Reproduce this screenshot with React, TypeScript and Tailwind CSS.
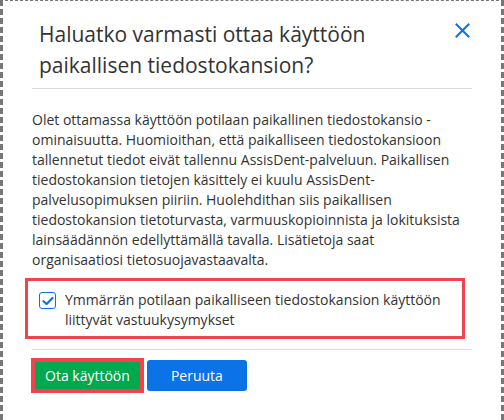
import React from "react";

const CheckIcon = () => (
  <span className="mt-[2px] flex h-[17px] w-[17px] shrink-0 items-center justify-center rounded-[3px] border-[1.5px] border-[#0b72e7] bg-white">
    <svg width="12" height="10" viewBox="0 0 12 10" fill="none">
      <path d="M1.5 5.2 L4.6 8 L10.5 2" stroke="#0b72e7" strokeWidth="2.2" strokeLinecap="round" strokeLinejoin="round" />
    </svg>
  </span>
);

const App = () => {
  return (
    <div className="h-[420px] w-[504px] overflow-hidden border-x-[3px] border-t border-dashed border-[#777] bg-white text-[#333]" style={{ fontFamily: '"Open Sans", "Noto Sans", sans-serif' }}>
      {/* header */}
      <div className="mx-[29px] flex items-start justify-between border-b border-[#d7dce1] pt-[18px] pb-[7px]">
        <h5 className="pl-[7px] text-[21px] leading-[31px] font-normal">
          Haluatko varmasti ottaa käyttöön paikallisen tiedostokansion?
        </h5>
        <button className="mt-[4px] mr-[2px] shrink-0 p-0 text-[#0b72e7]">
          <svg width="15" height="15" viewBox="0 0 15 15">
            <path d="M1.5 1.5 L13.5 13.5 M13.5 1.5 L1.5 13.5" stroke="currentColor" strokeWidth="2" strokeLinecap="square" />
          </svg>
        </button>
      </div>

      {/* body */}
      <div className="mx-[29px] border-b border-[#d7dce1] pt-[21px] pb-[10px]">
        <p className="w-[440px] text-[14px] leading-[20px]">
          Olet ottamassa käyttöön potilaan paikallinen tiedostokansio -ominaisuutta. Huomioithan, että paikalliseen tiedostokansioon tallennetut tiedot eivät tallennu AssisDent-palveluun. Paikallisen tiedostokansion tietojen käsittely ei kuulu AssisDent-palvelusopimuksen piiriin. Huolehdithan siis paikallisen tiedostokansion tietoturvasta, varmuuskopioinnista ja lokituksista lainsäädännön edellyttämällä tavalla. Lisätietoja saat
          <br />
          organisaatiosi tietosuojavastaavalta.
        </p>
        <label className="mt-[8px] mr-[7px] -ml-[7px] flex gap-[9px] border-[3px] border-[#f0434b] pt-[9px] pb-[6px] pl-[11px] pr-[8px] text-[14px] leading-[20px]">
          <CheckIcon />
          <span>Ymmärrän potilaan paikalliseen tiedostokansion käyttöön liittyvät vastuukysymykset</span>
        </label>
      </div>

      {/* footer */}
      <div className="mx-[28px] flex items-center gap-[3px] pt-[8px]">
        <div className="border-[4px] border-[#f0434b]">
          <button className="h-[27px] bg-[#00a84f] px-[10px] text-[14px] leading-[27px] text-white">Ota käyttöön</button>
        </div>
        <button className="h-[31px] w-[100px] rounded-[3px] bg-[#0b72e7] text-[14px] text-white">Peruuta</button>
      </div>
    </div>
  );
};

export default App;
